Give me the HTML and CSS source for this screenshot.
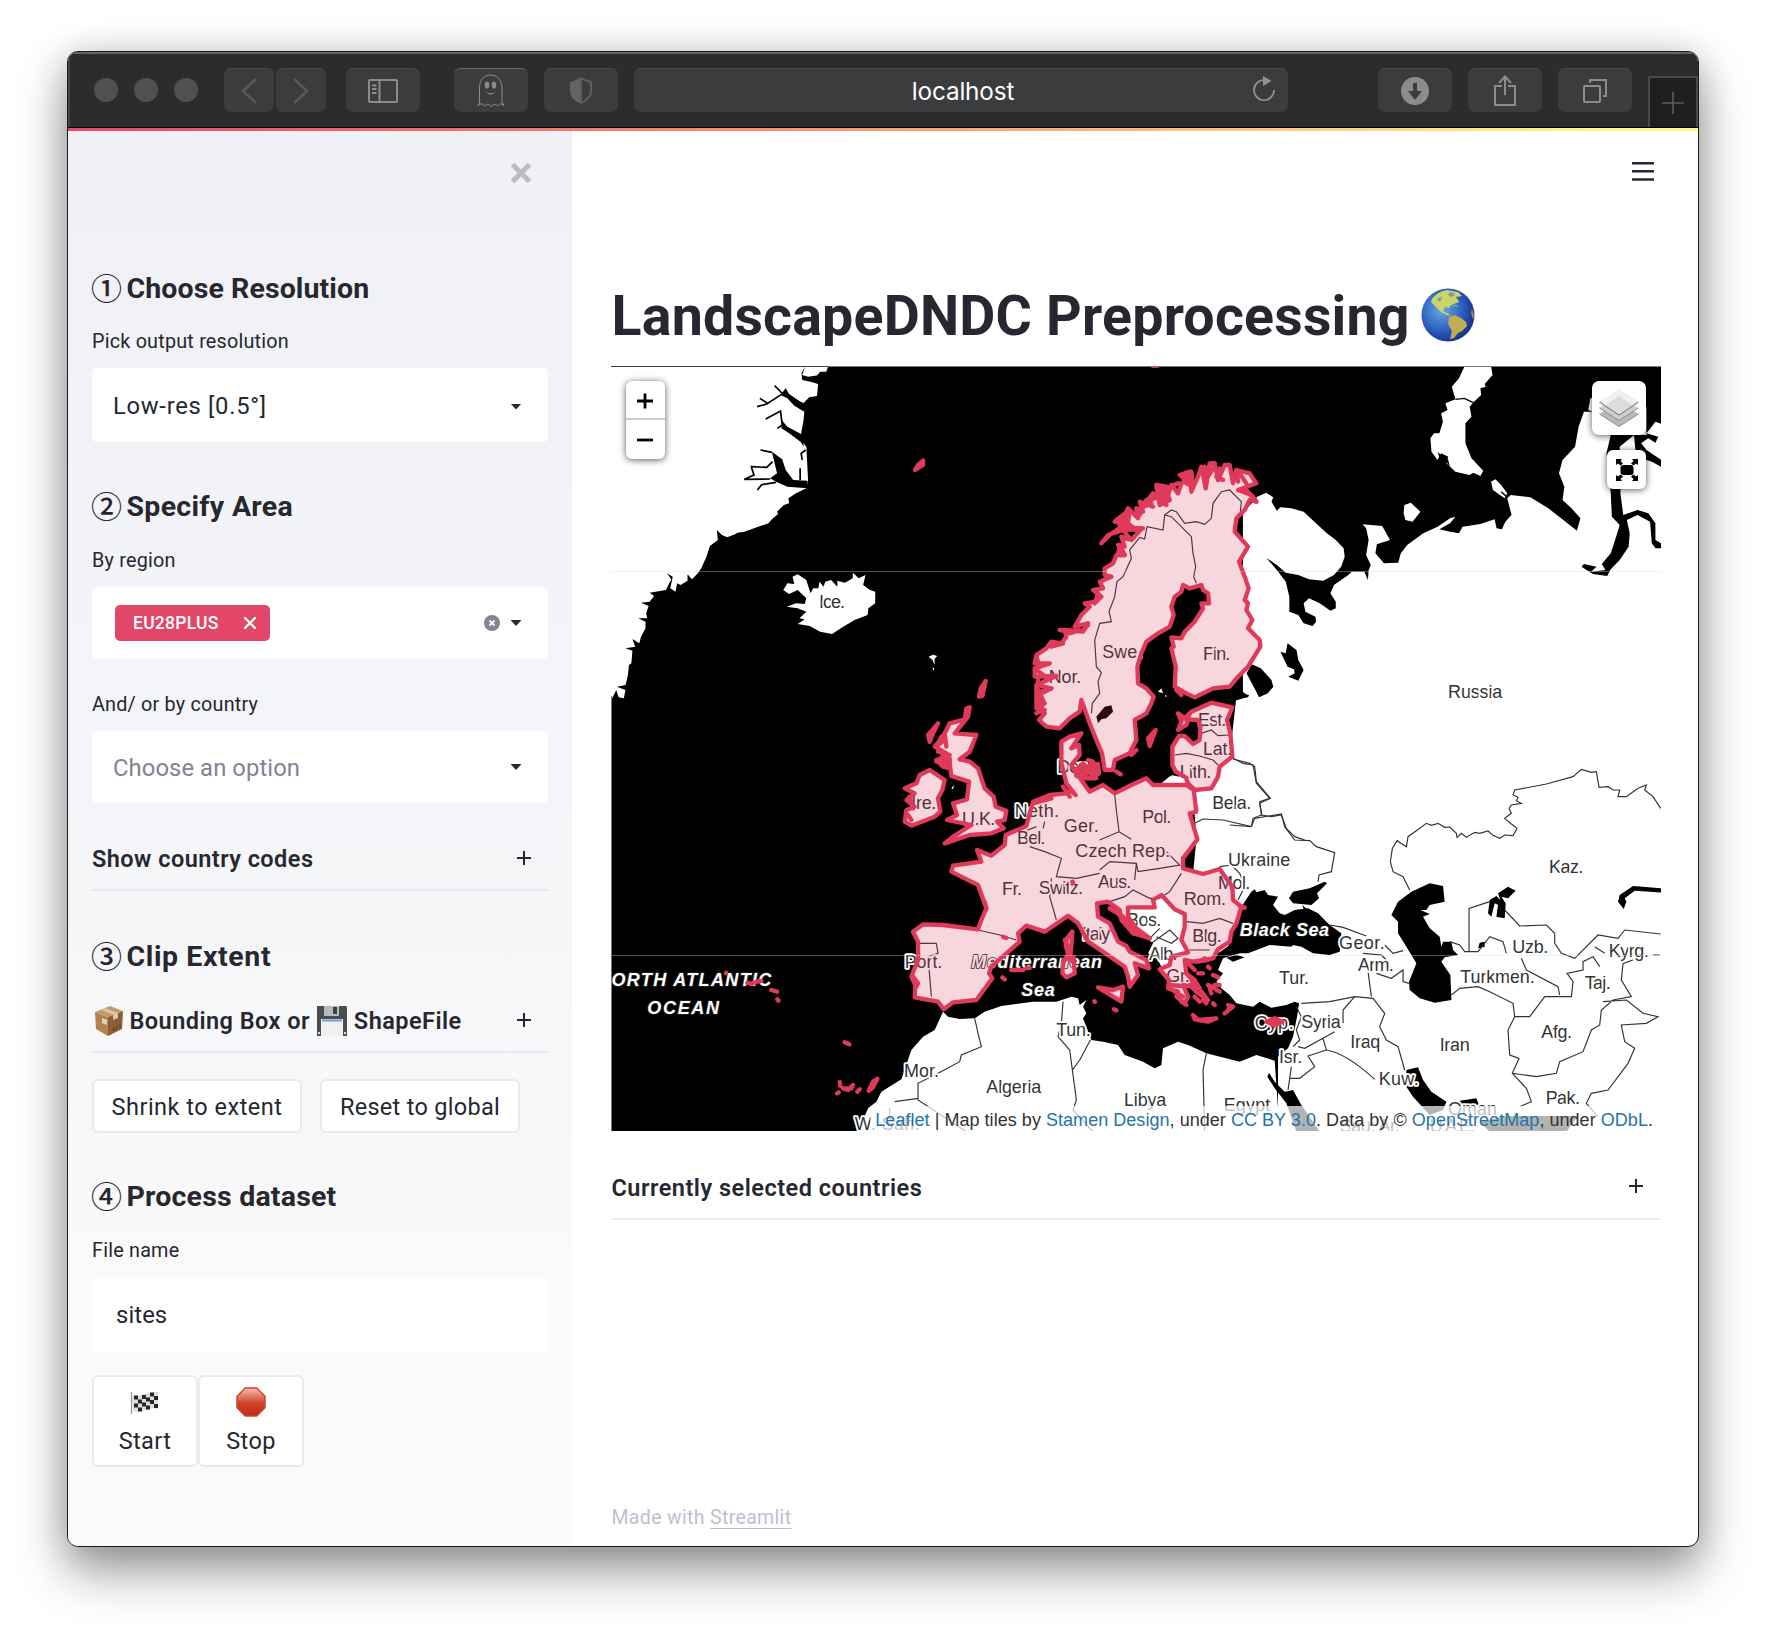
FILE: index.html
```html
<!DOCTYPE html>
<html lang="en">
<head>
<meta charset="utf-8">
<title>LandscapeDNDC Preprocessing</title>
<link rel="stylesheet" href="styles.css">
</head>
<body>
<div class="window">
  <header class="toolbar">
    <div class="lights"><i></i><i></i><i></i></div>
    <div class="nav">
      <span class="tb tb-nav"><svg width="50" height="44" viewBox="0 0 50 44"><path d="M31 11 L19 22 L31 33" fill="none" stroke="#57585a" stroke-width="2.6" stroke-linecap="round" stroke-linejoin="round"/></svg></span>
      <span class="tb tb-nav"><svg width="50" height="44" viewBox="0 0 50 44"><path d="M19 11 L31 22 L19 33" fill="none" stroke="#57585a" stroke-width="2.6" stroke-linecap="round" stroke-linejoin="round"/></svg></span>
    </div>
    <span class="tb tb-side"><svg width="30" height="26" viewBox="0 0 30 26"><g fill="none" stroke="#8b8c8e" stroke-width="2"><rect x="1" y="2" width="28" height="22" rx="1"/><path d="M11.5 2V24M4 7.500H8.500M4 11H8.500M4 15H8.500"/></g></svg></span>
    <span class="tb tb-ghost"><svg width="30" height="34" viewBox="0 0 30 34"><path d="M3.500 29V14C3.500 6 8 1 14.500 1S26 6 26 14V28L28 31.500L24 29.500L21.500 32L18.500 30L15 32.500L12 30L9 32L6 29.500L1.500 31.500Z" fill="none" stroke="#8b8c8e"/><g fill="#8b8c8e"><ellipse cx="11" cy="11" rx="2.300" ry="3.500"/><ellipse cx="18" cy="11" rx="2.300" ry="3.500"/><path d="M9.500 17Q14.500 21.500 20 17Q14.500 24 9.500 17Z"/></g></svg></span>
    <span class="tb tb-shield"><svg width="24" height="28" viewBox="0 0 24 28"><path d="M12 1L1 5V15Q1 22 12 27Z" fill="#636466"/><path d="M12 1.500L22 5V15Q22 21 12 26Z" fill="none" stroke="#5c5d5f" stroke-width="2"/></svg></span>
    <div class="tb url"><span>localhost</span><svg class="reload" width="28" height="28" viewBox="0 0 28 28"><path d="M14 4A10 10 0 1 0 24 14" fill="none" stroke="#929394" stroke-width="1.700"/><path d="M13 0L21.500 5L13 10Z" fill="#929394"/></svg></div>
    <span class="tb tb-dl"><svg width="28" height="28" viewBox="0 0 28 28"><circle cx="14" cy="14" r="14" fill="#8b8c8e"/><path d="M12 6H16V14H21L14 23L7 14H12Z" fill="#3a3b3d"/></svg></span>
    <span class="tb tb-share"><svg width="24" height="32" viewBox="0 0 24 32"><g fill="none" stroke="#8b8c8e" stroke-width="2"><path d="M9 11H2V30H22V11H15M12 20V2M6 8L12 1.500L18 8"/></g></svg></span>
    <span class="tb tb-tabs"><svg width="26" height="26" viewBox="0 0 26 26"><g fill="none" stroke="#8b8c8e" stroke-width="2"><rect x="2" y="8" width="16" height="16" rx="1"/><path d="M8 5V2H24V18H21"/></g></svg></span>
    <span class="newtab"><svg width="22" height="22" viewBox="0 0 22 22"><path d="M11 0V22M0 11H22" stroke="#5a5b5d" stroke-width="1.700"/></svg></span>
  </header>
  <div class="rainbow"></div>
  <div class="app">
    <aside class="sidebar">
      <div class="side-head"><svg width="22" height="22" viewBox="0 0 22 22"><path d="M2.500 2.500L19.500 19.500M19.500 2.500L2.500 19.500" stroke="#bbbcc1" stroke-width="5.200"/></svg></div>
      <h2 class="step"><span class="num">①</span><span class="t-choose">Choose Resolution</span></h2>
      <p class="label lb-first">Pick output resolution</p>
      <div class="field tall"><span class="value v-res">Low-res [0.5°]</span><i class="caret"></i></div>
      <h2 class="step gap2"><span class="num">②</span><span class="t-specify">Specify Area</span></h2>
      <p class="label">By region</p>
      <div class="field tags"><span class="tag">EU28PLUS<svg width="12" height="12" viewBox="0 0 12 12"><path d="M1 1L11 11M11 1L1 11" stroke="#fff" stroke-width="2.300" stroke-linecap="round"/></svg></span><svg class="clear" width="16" height="16" viewBox="0 0 16 16"><circle cx="8" cy="8" r="8" fill="#808495"/><path d="M5.500 5.500L10.500 10.500M10.500 5.500L5.500 10.500" stroke="#fff" stroke-width="1.800"/></svg><i class="caret"></i></div>
      <p class="label lb-country">And/ or by country</p>
      <div class="field"><span class="value muted">Choose an option</span><i class="caret"></i></div>
      <div class="expander ex1"><span>Show country codes</span><i class="plus"></i></div>
      <h2 class="step gap3"><span class="num">③</span><span class="t-clip">Clip Extent</span></h2>
      <div class="expander ex2">
        <span class="mixed"><svg width="28" height="30" viewBox="0 0 28 30"><path d="M0 6L15 0L28 5L13 11Z" fill="#c49a6c"/><path d="M0 6L13 11V30L1 23Z" fill="#b5804f"/><path d="M13 11L28 5L27 23L13 30Z" fill="#8a5f37"/><path d="M6 3.500L10 2L23 7V12L18 14V9Z" fill="#dcc4a4"/><path d="M7 12L12 14V19L7 17Z" fill="#d8d4cc"/><path d="M19 21V25M22 20V24M25 18V22" stroke="#5f4022"/></svg><b>Bounding Box or</b><svg width="30" height="30" viewBox="0 0 30 30"><path d="M0 0H29L30 1V30H0Z" fill="#4c4d50"/><path d="M7 0H22V9Q22 10 21 10H8Q7 10 7 9Z" fill="#b9babc"/><path d="M16 1H20V8H16Z" fill="#404143"/><path d="M4 13H26V30H4Z" fill="#f1f1f1"/><path d="M5 14.500H25" stroke="#6b9cd0" stroke-width="2"/><path d="M1 27H3M27 27H29" stroke="#ddd" stroke-width="2"/></svg><b>ShapeFile</b></span><i class="plus"></i></div>
      <div class="row"><button class="btn b-shrink">Shrink to extent</button><button class="btn b-reset">Reset to global</button></div>
      <h2 class="step gap4"><span class="num">④</span><span class="t-process">Process dataset</span></h2>
      <p class="label">File name</p>
      <div class="field tall"><span class="value input">sites</span></div>
      <div class="run">
        <button class="btn stack"><svg width="30" height="30" viewBox="0 0 30 30"><path d="M1.500 5V27" stroke="#999" stroke-width="1.300"/><path d="M2 8Q8 10 14 7T28 5V22Q22 20 16 23T3 24Z" fill="#ddd"/><path d="M4 8.500h4v4h-4zM12 8h4v4h-4zM20 5.500h4v4h-4zM8 12.500h4v4h-4zM16 10.500h4v4h-4zM24 9h4v4h-4zM4 16.500h4v4h-4zM12 15.500h4v4h-4zM20 13h4v4h-4zM8 20.500h4v4h-4zM16 18.500h4v4h-4zM24 17h4v4h-4z" fill="#262626"/></svg><span>Start</span></button>
        <button class="btn stack"><svg width="30" height="30" viewBox="0 0 30 30"><defs><linearGradient id="stop" x2="0" y2="1"><stop offset="0" stop-color="#f6c0b2"/><stop offset=".55" stop-color="#cf4123"/><stop offset="1" stop-color="#bd2e1c"/></linearGradient></defs><path d="M9.300 1H20.700L29 9.300V20.700L20.700 29H9.300L1 20.700V9.300Z" fill="url(#stop)" stroke="#cf4329" stroke-width="1.400"/></svg><span>Stop</span></button>
      </div>
    </aside>
    <main class="main">
      <div class="menu"><svg width="22" height="20" viewBox="0 0 22 20"><path d="M0 2.300H22M0 10.300H22M0 18.500H22" stroke="#262730" stroke-width="2.600"/></svg></div>
      <h1><span>LandscapeDNDC Preprocessing</span><svg width="54" height="54" viewBox="0 0 54 54"><defs><radialGradient id="sea" cx=".38" cy=".4" r=".65"><stop offset="0" stop-color="#6ba9de"/><stop offset=".6" stop-color="#2c61c4"/><stop offset="1" stop-color="#182f86"/></radialGradient></defs><circle cx="27" cy="27" r="26.500" fill="url(#sea)"/><g fill="#cbd46a"><path d="M11 11Q16 4 26 2L37 4L41 8L35 9L38 14L30 17L28 20L24 19L22 23L26 25L30 28L26 27L20 24L13 17L10 14Z"/><path d="M28 29L34 27L40 30L45 34L46 38L41 43L37 45L33 50L29 51L31 43L27 36Z" fill="#c0ac53"/><path d="M51 20L53 27L52 32L50 25Z" fill="#9a8c4d"/></g><path d="M29 4L34 6L31 9L27 7ZM16 11L21 9L19 14ZM31 17L37 18" fill="#5c9acb" stroke="#9fb76a"/></svg></h1>
      <section class="map">
        <svg class="canvas" viewBox="611.300 366 1050 765" width="1050" height="765">
          <defs>
            <g id="scan"><path d="M1160 130L1140 100 1100 90 1090 130 1080 75 1065 75 1045 120 1035 70 1020 70 1008 145 995 80 985 110 965 155 960 95 930 105 950 120 935 130 925 160 905 135 895 165 890 140 860 135 870 180 890 195 850 160 830 185 850 200 810 185 820 215 800 205 805 235 775 205 760 235 735 245 770 250 720 285 695 310 715 285 760 270 815 267 785 300 755 290 765 320 745 315 765 345 740 345 730 370 705 385 705 405 725 410 690 425 700 445 670 450 695 470 680 485 645 490 660 500 635 525 615 560 655 550 640 575 585 570 590 590 575 610 545 605 530 625 500 645 495 670 540 670 495 685 495 710 560 708 500 735 545 745 505 765 525 790 500 805 525 820 508 840 530 860 570 865 600 835 630 815 635 780 660 850 680 900 697 940 705 990 730 990 735 960 780 940 800 900 795 840 830 820 845 790 852 770 830 745 805 730 803 680 815 640 830 605 865 580 900 560 912 525 905 500 915 470 935 455 940 435 960 445 995 435 1000 450 1015 460 1018 490 995 490 1000 505 975 545 945 575 935 595 905 592 912 620 905 625 918 680 915 740 950 760 975 772 1030 745 1080 740 1105 710 1135 680 1172 620 1170 600 1135 565 1148 540 1130 510 1135 490 1125 480 1137 445 1125 410 1108 365 1135 320 1095 275 1100 235 1125 210 1140 180 1160 185 1145 165 1105 150Z"/></g>
            <g id="eu">
              <path d="M965-85L1025-112 1088-98 1072-60 1082-20 1088 50 1050 80 1045 110 1025 145 975 150 955 130 948 112 918 95 908 75 908 20 928-12 945-12 970 12 990 0 992-40 985-60 945-62Z"/>
              <path d="M590 130L575 70 575 5 600-10 635-20 605 25 628 15 630 45 605 75 620 100 660 155 700 135 735 160 785 135 830 115 850 135 950 135 972 150 980 215 960 220 983 298 940 355 940 385 1000 402 1050 387 1088 440 1090 480 1115 500 1100 550 1085 575 1080 605 1045 628 1030 655 970 665 945 660 950 700 990 745 940 735 955 770 945 790 920 770 925 755 895 745 898 720 870 688 900 675 905 650 955 637 935 600 945 560 945 522 915 508 875 465 850 480 855 502 775 502 775 530 800 565 840 595 790 578 755 540 750 510 715 485 682 490 685 530 720 550 745 605 770 618 780 635 830 660 838 685 795 670 805 705 780 740 775 710 765 680 700 635 655 605 625 550 595 527 525 575 470 557 445 580 450 605 365 680 358 700 368 715 320 780 250 787 222 808 205 785 135 772 137 735 125 710 145 660 145 605 130 575 160 553 220 555 325 568 335 540 350 505 325 435 285 415 245 395 250 377 335 365 322 330 365 347 405 315 408 285 470 258 480 220 490 185 540 165 590 160 600 150 618 165Z"/>
              <path d="M240-50L285-62 290-95 300-98 295-70 255-20 320-15 300 35 270 58 300 65 325 85 345 145 372 170 378 200 410 212 405 240 382 245 402 265 365 280 300 285 225 310 250 290 305 255 232 240 262 225 250 190 292 178 298 125 245 108 240 70 200 65 230 40 195 20 220-10Z"/>
              <path d="M180 90L225 120 218 150 205 175 212 215 195 230 125 257 105 245 110 210 135 200 110 180 135 160 105 145 140 130 150 105Z"/>
              <path d="M608 575L603 640 598 655 588 615 592 595ZM580 660L612 652 615 700 590 712 578 700ZM685 742L730 750 760 740 755 785ZM970 825L985 840 1040 835 1015 845 975 838Z"/>
              <path d="M835-5L858-30 840 18ZM925-80L945-65 960-80 950-45 925-30 935-55Z"/>
            </g>
          </defs>
          <rect x="611" y="366" width="1051" height="766" fill="#000"/>
          <g fill="#fff">
            <path transform="translate(600 260) scale(.34439 .33333)" d="M30 320H663L658 335 640 335 628 350 634 375 631 408 608 412 592 430 594 455 592 480 585 520 588 545 600 560 602 600 605 660 600 685 570 700 548 715 550 730 535 735 515 755 518 762 500 778 490 790 460 800 420 815 400 818 393 823 370 832 355 825 340 810 343 840 320 858 310 890 295 925 285 940 268 958 255 943 255 962 235 975 225 970 220 995 205 985 212 950 195 940 208 958 192 990 145 998 158 1008 145 1025 120 1028 142 1038 135 1060 138 1075 112 1075 133 1085 133 1105 120 1130 115 1150 95 1137 103 1160 75 1165 95 1172 92 1210 85 1215 82 1245 75 1275 50 1280 75 1290 70 1315 55 1312 48 1290 35 1318 30 1310ZM533 990L545 970 565 972 560 950 575 943 600 960 612 1000 620 985 635 985 638 965 650 980 655 965 672 960 690 980 690 962 712 968 735 955 735 938 752 955 772 945 765 975 785 990 800 995 800 1030 780 1045 778 1065 740 1080 700 1105 675 1122 640 1115 610 1098 575 1092 595 1078 580 1075 600 1055 575 1045 543 1040 570 1030 595 1032 600 1015 575 990 550 1002ZM955 1190L968 1184 980 1188 972 1197 973 1215 966 1200ZM966 1222L972 1226 969 1232Z"/>
            <path transform="translate(1120 260) scale(.35714 .33333)" d="M965 320H1040L1044 345 1022 372 1025 380 1010 385 1012 405 992 425 980 440 985 470 968 490 968 550 985 595 1018 632 1010 648 990 638 980 645 940 635 915 610 920 590 900 580 890 600 873 575 870 535 880 520 895 520 905 485 900 460 918 450 912 430 940 418 930 380 950 355ZM797 735L815 728 842 755 820 785 800 780 795 760ZM1040 665L1052 658 1068 675 1085 700 1078 715 1045 690ZM345 760L385 710 410 698 430 712 425 725 440 752 450 742 480 745 515 755 545 785 580 820 605 840 627 865 630 890 620 920 600 945 570 962 530 958 500 945 465 938 440 915 410 893 440 930 465 965 475 1010 475 1055 500 1065 515 1090 540 1098 550 1085 548 1070 520 1055 515 1030 530 1015 560 1030 590 1052 605 1045 605 1025 590 1000 600 975 640 945 650 935 685 935 695 960 697 930 703 915 690 885 697 840 690 805 680 793 735 798 757 840 720 853 716 880 740 910 780 908 787 880 805 855 850 820 890 800 925 775 940 770 925 790 895 808 925 815 950 820 960 800 1010 792 1050 778 1055 805 1070 808 1080 785 1097 765 1090 735 1085 715 1095 705 1150 712 1200 745 1260 795 1280 812 1290 775 1265 745 1240 720 1245 680 1230 640 1240 600 1275 560 1285 500 1300 455 1325 455 1312 450 1318 415 1400 400 1450 420 1525 480V1400H345Z"/>
            <path transform="translate(870 740) scale(.33333)" d="M875 130L905 105 950 115 1080 50 1100-130H2400V1180H1225V950L1255 925 1270 890 1282 830 1288 790 1275 785 1250 795 1205 803 1170 785 1150 800 1100 790 1080 765 1055 745 1040 725 1060 700 1045 690 1060 655 1110 640 1085 612 1045 640 1110 510 1050 390 970 400 980 300 970 150ZM770 500L875 465 945 520 955 640 880 690 865 660 835 640 850 610 790 560ZM-40 1175L-20 1140-5 1105 20 1085 35 1055 95 1018 125 930 160 890 195 870 220 815 235 830 270 837 315 835 345 815 395 798 490 785 560 785 605 770 625 775 630 795 650 780 640 800 650 820 640 835 665 900 700 905 745 915 765 945 820 965 855 985 875 975 880 925 925 905 955 915 1010 940 1110 965 1160 945 1215 962 1230 1180ZM245 145L253 135 250 148ZM865-145L875-155 880-140ZM885-135L893-132 888-129Z"/>
            <use href="#scan" transform="translate(870 440) scale(.33333)"/><use href="#eu" transform="translate(870 740) scale(.33333)"/>
          </g>
          <g transform="translate(600 260) scale(.34439 .33333)" stroke="#000" stroke-width="5" fill="none">
            <path stroke="none" fill="#000" d="M597 318L588 345 605 350 640 345 634 372 615 366 588 360 586 340ZM525 405L540 385 550 402 583 425 594 430 594 455 565 437 545 415ZM528 480L545 500 590 525 592 560 583 545 550 520 528 505ZM500 575L530 598 540 630 562 660 603 662 603 685 545 680 512 665 495 655 515 640 508 610Z"/>
            <path d="M528 403L485 432 457 440M465 415L488 430M508 377L530 400M482 477L525 453 530 495 516 505M467 570L500 577M438 620L485 622 502 605M440 620L448 645 420 658 495 657M458 690L470 674 512 667M598 570L585 580 588 600M582 625V660"/>
          </g>
          <g transform="translate(1120 260) scale(.35714 .33333)">
            <path d="M1375 525L1363 580 1375 700 1378 770 1400 795 1390 830 1375 880 1350 912 1360 930 1320 935 1335 920 1300 912 1293 920 1325 942 1365 948 1375 928 1400 900 1425 860 1428 820 1420 780 1450 765 1485 785 1490 850 1500 865 1525 865V855L1500 840V790L1480 760 1450 750 1410 765 1402 700 1400 560 1440 525 1445 580 1475 600 1490 605 1525 626V606L1475 570 1460 550 1480 535 1500 548 1508 530 1475 520 1500 485 1525 495V320H1475V525ZM370 1213L395 1225 425 1260 430 1280 415 1300 390 1312 380 1290 355 1240ZM450 1175L465 1180 470 1150 495 1170 500 1200 515 1230 500 1262 472 1250 490 1240 488 1228 470 1220ZM890 575L905 590 920 600 925 620 910 600 900 608ZM300 1310L325 1275 360 1310 300 1330Z"/>
            <path d="M940 418L965 415 990 428M1068 695L1085 712" stroke="#000" stroke-width="4" fill="none"/>
          </g>
          <g transform="translate(870 440) scale(.33333)"><path d="M1050 765L1090 740 1100 755 1138 765 1135 772 1100 775 1088 790 1050 788ZM685 850L680 830 705 800 725 796 730 815 710 835 695 838ZM910 985L895 1000 905 1010Z"/></g>
          <g transform="translate(1230 680) scale(.33333)">
            <path d="M30 690L45 665 65 635 75 628 80 637 105 630 115 645 145 650 130 675 150 700 165 705 195 690 235 685 265 700 300 735 335 760 330 815 300 825 250 820 215 800 190 795 185 800 120 795 55 820 0 820-5 800 5 780 10 745 28 710ZM178 655L190 635 240 625 285 605 292 610 262 640 268 655 245 675 190 670ZM218 675L232 688 222 690ZM485 705L505 665 545 635 600 610 640 618 645 665 600 675 590 690 572 690 600 702 580 710 600 745 630 770 635 800 640 785 665 785 670 810 685 825 645 832 635 845 662 885 665 960 615 968 570 955 540 930 538 905 560 850 530 800 505 760 505 725ZM775 700L780 660 800 648 812 660 805 640 835 620 858 632 835 655 815 650 828 670 825 715 800 710 805 675 795 670 785 710ZM1300 625L1210 618 1170 645 1165 665 1182 687 1190 665 1185 655 1215 632 1300 638ZM745 805L750 788 765 785 765 800ZM-10 833L20 825 45 832 10 845ZM118 1178L135 1205 165 1235 190 1230 215 1275 270 1355H200L170 1270 135 1225 113 1190ZM530 1170L565 1162 580 1200 605 1235 650 1265 640 1290 600 1305 550 1250 530 1220ZM690 1262L740 1255 748 1275 700 1280ZM750 1325L830 1308H1045L1010 1355H780Z"/>
          </g>
          <g fill="none" stroke="#333" stroke-width="3.500">
            <path transform="translate(870 440) scale(.33333)" d="M665 820L668 790 690 760 685 725 695 698 680 680 675 600 690 550 725 545 718 515 735 470 742 425 760 410 785 355 780 330 810 292 825 297 832 260 880 270 885 225 905 230 940 265 965 290 970 340 978 380 972 410 980 430M885 225L905 210 920 215 945 250 980 245 1005 253 1025 235 1030 190 1055 155 1080 150 1115 185 1112 215M995 880L1025 870 1045 887 1080 885M915 945L950 940 990 948 1030 960 1045 975"/>
            <path transform="translate(870 740) scale(.33333)" d="M735 165L740 210 748 275 690 300M748 275L785 298M975 250L1000 237 1060 240 1145 260 1150 235 1175 225 1170 185 1200 175 1160 130 1150 75 1120 70 1090 55M1175 225L1205 230 1235 225 1250 265 1275 290 1305 300M480 320L525 335 575 355 560 410 620 415 690 400M525 245L520 265M690 390L720 365 800 370 805 395 870 385 930 375 890 335M800 370L795 420M545 415L540 470 560 540M720 485L765 470 790 450 840 475 870 475 900 455 935 400M950 545L1000 550 1050 535 1090 550M960 630L1020 630M840 595L870 565M845 610L900 570 925 595 905 610 860 590M145 610L200 610 205 640 175 650 185 770M325 570L390 585 440 600M580 785L575 850 565 890 600 930 608 990 630 960 662 900M608 990L620 1080 610 1110 670 1175M315 835L325 880 335 920 275 945 270 965 205 1000 145 1030V1080L290 1175M75 1085L145 1075M60 1105V1160M1010 940L1000 990 1005 1175M1050 380L1085 375 1110 400 1125 440 1105 480M450 280L500 260"/>
            <path transform="translate(1230 680) scale(.33333)" d="M10 237L60 250 75 260 80 305 122 355 90 370 97 408M0 435L65 440 75 415 155 402 165 440 195 480 240 482 260 500 315 518 305 575 268 585 265 605M540 630L520 590 490 575 482 545 488 505 502 482 530 500 535 470 560 452 590 430 605 436 625 430 645 442 660 441 680 460 682 472 695 460 710 472 735 457 750 460 775 453 790 466 810 475 825 465 850 467 862 445 845 432 825 415 845 400 838 385 845 375 875 370 860 362 865 352 850 345 855 330 950 312 1030 290 1055 268 1085 277 1100 275 1108 322 1135 320 1150 330 1170 330 1165 350 1190 350 1225 325 1250 315 1245 330 1270 350 1293 385M300 735L340 742 410 768M400 820L455 825 470 840M465 795L490 820 520 812M415 875L425 950M440 880L485 895 520 870 520 905 538 910M215 970L300 965 375 950 430 955 465 1000 450 1040 470 1080 505 1100 525 1170M375 950L340 990 340 1030M205 1100L225 1105 315 1055M280 1075L290 1110Q350 1120 435 1198M290 1110L235 1128 255 1160 210 1195H180M200 980L215 1010 200 1050 210 1080 190 1100M185 1160L175 1230M718 815V685L780 665M825 690L870 738 950 735 975 760 975 790 995 820 1035 835 1105 765 1165 775 1185 750 1293 762M660 785L690 795 705 815H745L780 770 820 785 830 820M875 835L890 870 985 920 990 945M665 945L690 925 745 920 780 935 850 970 855 1010 835 1050 840 1125 868 1135 848 1180 920 1190 980 1180 990 1145 1060 1115 1085 1050 1110 1035 1115 990 1150 960 1205 950 1175 900 1180 850 1210 840M1270 825H1290M848 1180L890 1225 905 1265 870 1280M855 1010L900 1010 945 950 1025 950 1030 905 1012 880 1060 870 1060 845 1090 830 1110 860M1095 800L1125 820M1120 965L1190 960 1240 1000 1285 1010 1250 1030 1175 1035 1185 1085 1215 1105 1195 1150 1135 1230 1085 1240 1070 1270 1105 1310"/>
          </g>
          <g class="places">
            <text class="ice" x="819.400" y="608.300" textLength="26">Ice.</text>
            <g transform="translate(870 440) scale(.33333)"><text x="698" y="655" textLength="120">Swe.</text><text x="537" y="730" textLength="98">Nor.</text><text x="1000" y="660" textLength="82">Fin.</text><text x="985" y="858" textLength="85">Est.</text><text x="1000" y="946" textLength="88">Lat.</text><text x="930" y="1013" textLength="95">Lith.</text></g>
            <g transform="translate(870 740) scale(.33333)"><text x="435" y="232" textLength="133">Neth.</text><text x="582" y="275" textLength="105">Ger.</text><text x="818" y="248" textLength="87">Pol.</text><text x="1028" y="207" textLength="117">Bela.</text><text x="442" y="312" textLength="85">Bel.</text><text x="617" y="350" textLength="285">Czech Rep.</text><text x="1075" y="377" textLength="187">Ukraine</text><text x="397" y="464" textLength="60">Fr.</text><text x="507" y="462" textLength="133">Switz.</text><text x="685" y="444" textLength="100">Aus.</text><text x="1045" y="446" textLength="97">Mol.</text><text x="942" y="496" textLength="127">Rom.</text><text x="637" y="600" textLength="85">Italy</text><text x="772" y="558" textLength="103">Bos.</text><text x="968" y="606" textLength="88">Blg.</text><text x="838" y="660" textLength="85">Alb.</text><text x="890" y="725" textLength="70">Gr.</text><text x="105" y="683" textLength="113">Port.</text><text x="277" y="254" textLength="100">U.K.</text><text x="125" y="206" textLength="75">Ire.</text><text x="563" y="100" textLength="105">Den.</text><text x="1228" y="733" textLength="90">Tur.</text><text x="560" y="888" textLength="103">Tun.</text><text x="103" y="1012" textLength="105">Mor.</text><text x="350" y="1060" textLength="165">Algeria</text><text x="763" y="1098" textLength="127">Libya</text><text x="1062" y="1112" textLength="140">Egypt</text><text x="1228" y="969" textLength="70">Isr.</text><text x="1155" y="866" textLength="117">Cyp.</text><text x="-45" y="1170" textLength="195">W. Sah.</text></g>
            <g transform="translate(1230 680) scale(.33333)"><text x="655" y="54" textLength="163">Russia</text><text x="958" y="579" textLength="103">Kaz.</text><text x="328" y="808" textLength="137">Geor.</text><text x="385" y="874" textLength="107">Arm.</text><text x="848" y="820" textLength="108">Uzb.</text><text x="1137" y="830" textLength="120">Kyrg.</text><text x="692" y="910" textLength="223">Turkmen.</text><text x="1065" y="926" textLength="78">Taj.</text><text x="215" y="1043" textLength="118">Syria</text><text x="362" y="1103" textLength="90">Iraq</text><text x="630" y="1113" textLength="90">Iran</text><text x="935" y="1075" textLength="92">Afg.</text><text x="447" y="1215" textLength="120">Kuw.</text><text x="948" y="1271" textLength="103">Pak.</text><text x="655" y="1305" textLength="147">Oman</text><text x="330" y="1355" textLength="180">Sau. Ar.</text><text x="600" y="1355" textLength="135">U.A.E.</text></g>
          </g>
          <g class="seas">
            <g transform="translate(870 740) scale(.33333)"><text x="305" y="683" textLength="392">Mediterranean</text><text x="455" y="768" textLength="100">Sea</text></g>
            <text transform="translate(1230 680) scale(.33333)" x="30" y="769" textLength="268">Black Sea</text>
            <g transform="translate(600 680) scale(.33333)"><text x="-8" y="918" textLength="523">NORTH ATLANTIC</text><text x="143" y="1003" textLength="215">OCEAN</text></g>
          </g>
          <g fill="#d63256" fill-opacity=".2" stroke="#df3a5a" stroke-width="13" stroke-linejoin="round" stroke-linecap="round">
            <use href="#scan" transform="translate(870 440) scale(.33333)"/>
            <use href="#eu" transform="translate(870 740) scale(.33333)"/>
            <g fill="#df3a5a" fill-opacity="1">
              <path transform="translate(870 440) scale(.33333)" d="M136 90L145 75 160 62 160 75ZM328 770L333 745 348 723 338 768ZM935 105L965 95 970 140 950 130ZM740 240L780 210 775 250 800 270 750 255ZM860 140L890 150 900 180 870 195ZM500 740L520 780 515 810 500 800ZM180 905L175 885 205 850 190 880ZM205 915L215 890 225 900ZM200 960L240 955 240 985 220 980ZM1020 72L1035 70M1060 120L1040 110M820 190L855 175M750 315L765 345 745 345ZM740 995L753 1003M920 750L935 765M570 570L600 575M1130 150L1160 185M1100 90L1105 125M1005 80L1015 110 1030 85M1050 85L1045 110M1110 100L1130 130M900 140L925 130M800 210L845 190M810 225L830 180M760 270L780 295M770 260L820 265M500 690L530 712M500 650L510 680M545 620L580 610M600 580L630 570M685 460L675 490M500 760L545 745M500 820L525 810M800 930L785 945M640 570L655 555M505 720L500 760M240 945L205 935M230 920L225 880"/>
              <path transform="translate(870 740) scale(.33333)" d="M618 90L640 70 655 85 645 112 620 108ZM660 75L685 72 688 100 670 112 655 95ZM655 60L670 65M635 115L680 115M425 690L460 690M470 684L480 684M398 712L405 718M674 784L676 786M733 808L740 811M608 425L610 430M400 590L410 594M720 505L745 520 770 555 790 580 830 590 800 570 760 530ZM1110 498L1125 503M990 665L1005 655M1020 685L1015 680M1030 705L1045 712M985 700L1000 700M1040 750L1050 755M1075 795L1090 800 1065 820M1000 780L1010 790M1020 745L1025 760M970 720L985 740M1190 845L1215 835 1238 845 1215 857ZM915 755L940 770M960 735L980 755 1000 770M1030 790L1035 795M1035 735L1050 735M345 485L350 505M130 710L145 730 140 740M955 670L975 690M950 700L975 720 990 745 965 735M975 770L990 785M995 755L1015 780M900 735L935 738M935 785L950 795M1015 735L1035 745M980 665L1015 660M590 650L610 665M490 190L545 175M580 140L600 170M120 170L130 205M115 225L125 240M585 600L595 620"/>
              <path transform="translate(600 680) scale(.33333)" d="M379 878V880M443 908L455 912 470 905 485 903M515 930L532 935M533 958L536 962M735 1087L749 1093M720 1206L722 1218M712 1240L717 1237M730 1225L745 1230 760 1215 755 1225ZM773 1235L780 1228M807 1232L820 1205 833 1196 820 1222Z"/>
              <path d="M1153 366L1158 366" stroke-width="4"/>
            </g>
          </g>
          <path d="M611 571.500H1662M611 955.500H1662" stroke="#d9d9d9" stroke-opacity=".38" stroke-width="1"/>
          <path d="M828 366.500H1662M611.800 696V1131" stroke="#777" stroke-width="1" fill="none"/>
        </svg>
        <div class="zoomctl"><span><svg width="16" height="16" viewBox="0 0 16 16"><path d="M8 .500V15.500M0 8H16" stroke="#000" stroke-width="2.800"/></svg></span><span><svg width="16" height="16" viewBox="0 0 16 16"><path d="M0 8H16" stroke="#000" stroke-width="2.800"/></svg></span></div>
        <div class="layers"><svg width="40" height="40" viewBox="0 0 40 40"><path d="M20 14L39.500 26 20 38.500.5 26Z" fill="#b9b9b9"/><path d="M.5 26L20 38.500 39.500 26" fill="none" stroke="#8c8c8c"/><path d="M20 8L39.500 20 20 32.500.5 20Z" fill="#cfcfcf"/><path d="M.5 20L20 32.500 39.500 20" fill="none" stroke="#8c8c8c"/><path d="M20 1L39.500 13.500 20 26.500.5 13.500Z" fill="#f0f0f0"/><path d="M20 8L33 17 20 25.500 7 17Z" fill="#dcdcdc"/><path d="M.5 14L20 27 39.500 14" fill="none" stroke="#8c8c8c" stroke-width="1.300"/></svg></div>
        <div class="full"><svg width="22" height="22" viewBox="0 0 22 22"><path d="M0 0H6L4.500 2 7 4.500 4.500 6.500 2 4.500 0 6ZM22 0H16L17.500 2 15 4.500 17.500 6.500 20 4.500 22 6ZM0 22H6L4.500 20 7 17.500 4.500 15.500 2 17.500 0 16ZM22 22H16L17.500 20 15 17.500 17.500 15.500 20 17.500 22 16Z"/><rect x="4.500" y="6" width="13" height="10" rx="3"/></svg></div>
        <div class="credit"><a>Leaflet</a> | Map tiles by <a>Stamen Design</a>, under <a>CC BY 3.0</a>. Data by © <a>OpenStreetMap</a>, under <a>ODbL</a>.</div>
      </section>
      <div class="expander ex-main"><span>Currently selected countries</span><i class="plus"></i></div>
      <footer>Made with <a>Streamlit</a></footer>
    </main>
  </div>
</div>
</body>
</html>
```
FILE: styles.css
```css
* { box-sizing: border-box; }
body { margin: 0; background: #fff; color: #262730; font-family: Roboto, sans-serif; overflow: hidden; height: 1630px; }
h1, h2, p { margin: 0; }
svg { display: block; flex: none; }
.window { width: 1632px; height: 1496px; margin: 51px 0 0 67px; border: 1px solid #1c1c1d; border-radius: 11px; overflow: hidden; display: flex; flex-direction: column; background: #fff; box-shadow: 0 24px 50px rgba(0,0,0,.4), 0 2px 34px rgba(0,0,0,.16); }
.toolbar { height: 76px; flex: none; display: flex; align-items: flex-start; padding: 16px 0 0 26px; background: #2b2c2e; border-bottom: 1px solid #000; box-shadow: inset 0 2px 0 #626365, inset 2px 0 0 #444547; }
.lights { display: flex; gap: 16px; padding-top: 10px; width: 130px; flex: none; }
.lights i { width: 24px; height: 24px; border-radius: 50%; background: #4f5052; }
.tb { height: 44px; width: 74px; flex: none; border-radius: 7px; background: #3b3c3e; border-top: 1px solid #4b4c4e; display: flex; align-items: center; justify-content: center; }
.nav { display: flex; gap: 2px; }
.tb-nav { width: 50px; }
.tb-side { margin-left: 20px; }
.tb-ghost { margin-left: 34px; border-top-color: #67686a; }
.tb-shield { margin-left: 16px; }
.url { width: 654px; margin-left: 16px; padding-left: 4px; position: relative; color: #fff; font: 24.300px/44px Inter, sans-serif; letter-spacing: -.15px; }
.reload { position: absolute; right: 10px; top: 7px; }
.tb-dl { margin-left: 90px; }
.tb-share, .tb-tabs { margin-left: 16px; }
.newtab { width: 50px; height: 51px; margin: 8px 0 0 16px; background: #1e1f21; border: 2px solid #48494b; border-bottom: 0; display: flex; align-items: center; justify-content: center; flex: none; }
.rainbow { height: 3px; flex: none; background: linear-gradient(90deg, #e6476b 0, #f3886f 38%, #fac280 70%, #fffb88 96%); }
.app { display: flex; flex: 1; min-height: 0; }
.sidebar { width: 504px; flex: none; padding: 0 24px; background: linear-gradient(#eff1f6, #f4f5f8 45%, #fafafa 85%); display: flex; flex-direction: column; }
.side-head { height: 139px; flex: none; padding: 31px 16px 0; display: flex; justify-content: flex-end; }
.step { height: 36px; flex: none; display: flex; align-items: center; font-size: 28.500px; line-height: 36px; font-weight: 700; white-space: nowrap; }
.step span:last-child { padding-top: 1px; }
.num { font: 500 31px/34px "Noto Sans CJK JP", sans-serif; height: 36px; width: 35.500px; margin-left: -1px; flex: none; }
.t-choose { letter-spacing: .1px; }
.t-specify { letter-spacing: .3px; }
.t-clip { letter-spacing: .6px; }
.t-process { letter-spacing: .2px; }
.label { height: 30px; flex: none; margin-top: 21px; padding-top: 1px; font-size: 19.800px; line-height: 30px; letter-spacing: .21px; }
.lb-first { margin-top: 20px; }
.lb-country { margin-top: 30px; }
.field { height: 72px; margin-top: 12px; flex: none; border-radius: 5px; background: #fff; display: flex; align-items: center; padding: 0 26.500px 0 21px; font-size: 23.800px; }
.tall { height: 74px; }
.value { flex: 1; padding-top: 1px; }
.v-res { letter-spacing: .7px; }
.tall .caret { margin-top: 3px; }
.input { padding-left: 3px; letter-spacing: .1px; }
.muted { color: #808495; letter-spacing: .08px; }
.caret { width: 11px; height: 6px; background: #262730; clip-path: polygon(0 0, 100% 0, 50% 100%); flex: none; }
.tags { padding-left: 23px; }
.tag { width: 155px; height: 36px; border-radius: 5px; background: #e34768; color: #fff; font-size: 17.500px; font-weight: 500; letter-spacing: .25px; display: flex; align-items: center; justify-content: space-between; padding: 0 14px 0 18px; margin-right: auto; }
.clear { margin-right: 10.500px; }
.gap2 { margin-top: 46px; }
.gap3 { margin-top: 47px; }
.gap4 { margin-top: 45px; }
.expander { height: 62px; flex: none; border-bottom: 2px solid #e6eaf1; display: flex; align-items: center; justify-content: space-between; padding-right: 17px; font-size: 23.500px; font-weight: 600; letter-spacing: .45px; white-space: nowrap; }
.ex1 { margin-top: 26px; }
.ex2 { margin-top: 17px; }
.mixed { display: flex; align-items: center; gap: 7px; padding-left: 2.500px; }
.mixed b { font-weight: 600; }
.plus { width: 14px; height: 14px; margin-bottom: 2px; background: linear-gradient(#262730, #262730) 50% 50% / 14px 2px no-repeat, linear-gradient(#262730, #262730) 50% 50% / 2px 14px no-repeat; }
.row { display: flex; gap: 18px; margin-top: 26px; }
.btn { height: 54px; border: 2px solid #e6eaf1; border-radius: 6px; background: #fff; padding: 1px 0 0; color: #262730; font: 23.500px/30px Roboto, sans-serif; white-space: nowrap; }
.b-shrink { width: 210px; letter-spacing: .5px; }
.b-reset { width: 200px; letter-spacing: .3px; }
.run { display: flex; margin-top: 24px; }
.stack { width: 106px; height: 92px; display: flex; flex-direction: column; align-items: center; gap: 10px; padding-top: 10px; line-height: 28px; letter-spacing: .4px; }
.main { flex: 1; padding: 0 38px 0 39px; display: flex; flex-direction: column; min-width: 0; }
.menu { height: 148px; padding: 30px 6px 0; display: flex; justify-content: flex-end; flex: none; }
h1 { height: 72px; margin-bottom: 15px; padding: 3px 0 0 .5px; display: flex; align-items: center; gap: 11.500px; font-size: 55.500px; line-height: 72px; font-weight: 700; letter-spacing: .2px; white-space: nowrap; flex: none; }
h1 svg { margin-top: -3px; }
.map { height: 765px; width: 1050px; position: relative; overflow: hidden; flex: none; }
.places text { font: 54px "Liberation Sans", sans-serif; fill: #333; stroke: #fff; stroke-width: 11px; stroke-linejoin: round; paint-order: stroke; }
.places .ice { font-size: 18px; stroke-width: 3px; }
.seas text { font: italic bold 54px "Liberation Sans", sans-serif; fill: #fff; stroke: #222; stroke-width: 5px; paint-order: stroke; }
.zoomctl { position: absolute; left: 14.500px; top: 15px; width: 39px; border-radius: 6px; background: #fff; box-shadow: 0 1px 7px rgba(0,0,0,.65); }
.zoomctl span { height: 39px; display: flex; align-items: center; justify-content: center; }
.zoomctl span:first-child { border-bottom: 2px solid #ccc; padding-top: 3px; }
.layers, .full { position: absolute; right: 15px; background: #fff; border-radius: 7px; display: flex; align-items: center; justify-content: center; box-shadow: 0 1px 7px rgba(0,0,0,.65); }
.layers { top: 15px; width: 54px; height: 54px; }
.full { top: 84px; width: 39px; height: 39px; border-radius: 6px; }
.credit { position: absolute; right: 0; bottom: 0; height: 25px; padding: 2px 8px 0 5px; background: rgba(255,255,255,.7); color: #333; font: 18px/24px "Liberation Sans", sans-serif; white-space: nowrap; letter-spacing: .04px; }
.credit a { color: #2474a6; }
.ex-main { margin: 26px 0 0 .5px; width: 1048.500px; padding-right: 17px; height: 63px; letter-spacing: .5px; }
.ex-main .plus { margin-bottom: 3px; }
footer { margin-top: auto; padding-left: .5px; height: 45px; font-size: 19.500px; line-height: 34px; letter-spacing: .34px; color: #bcc0cf; }
footer a { text-decoration: underline; text-underline-offset: 4px; }
```
